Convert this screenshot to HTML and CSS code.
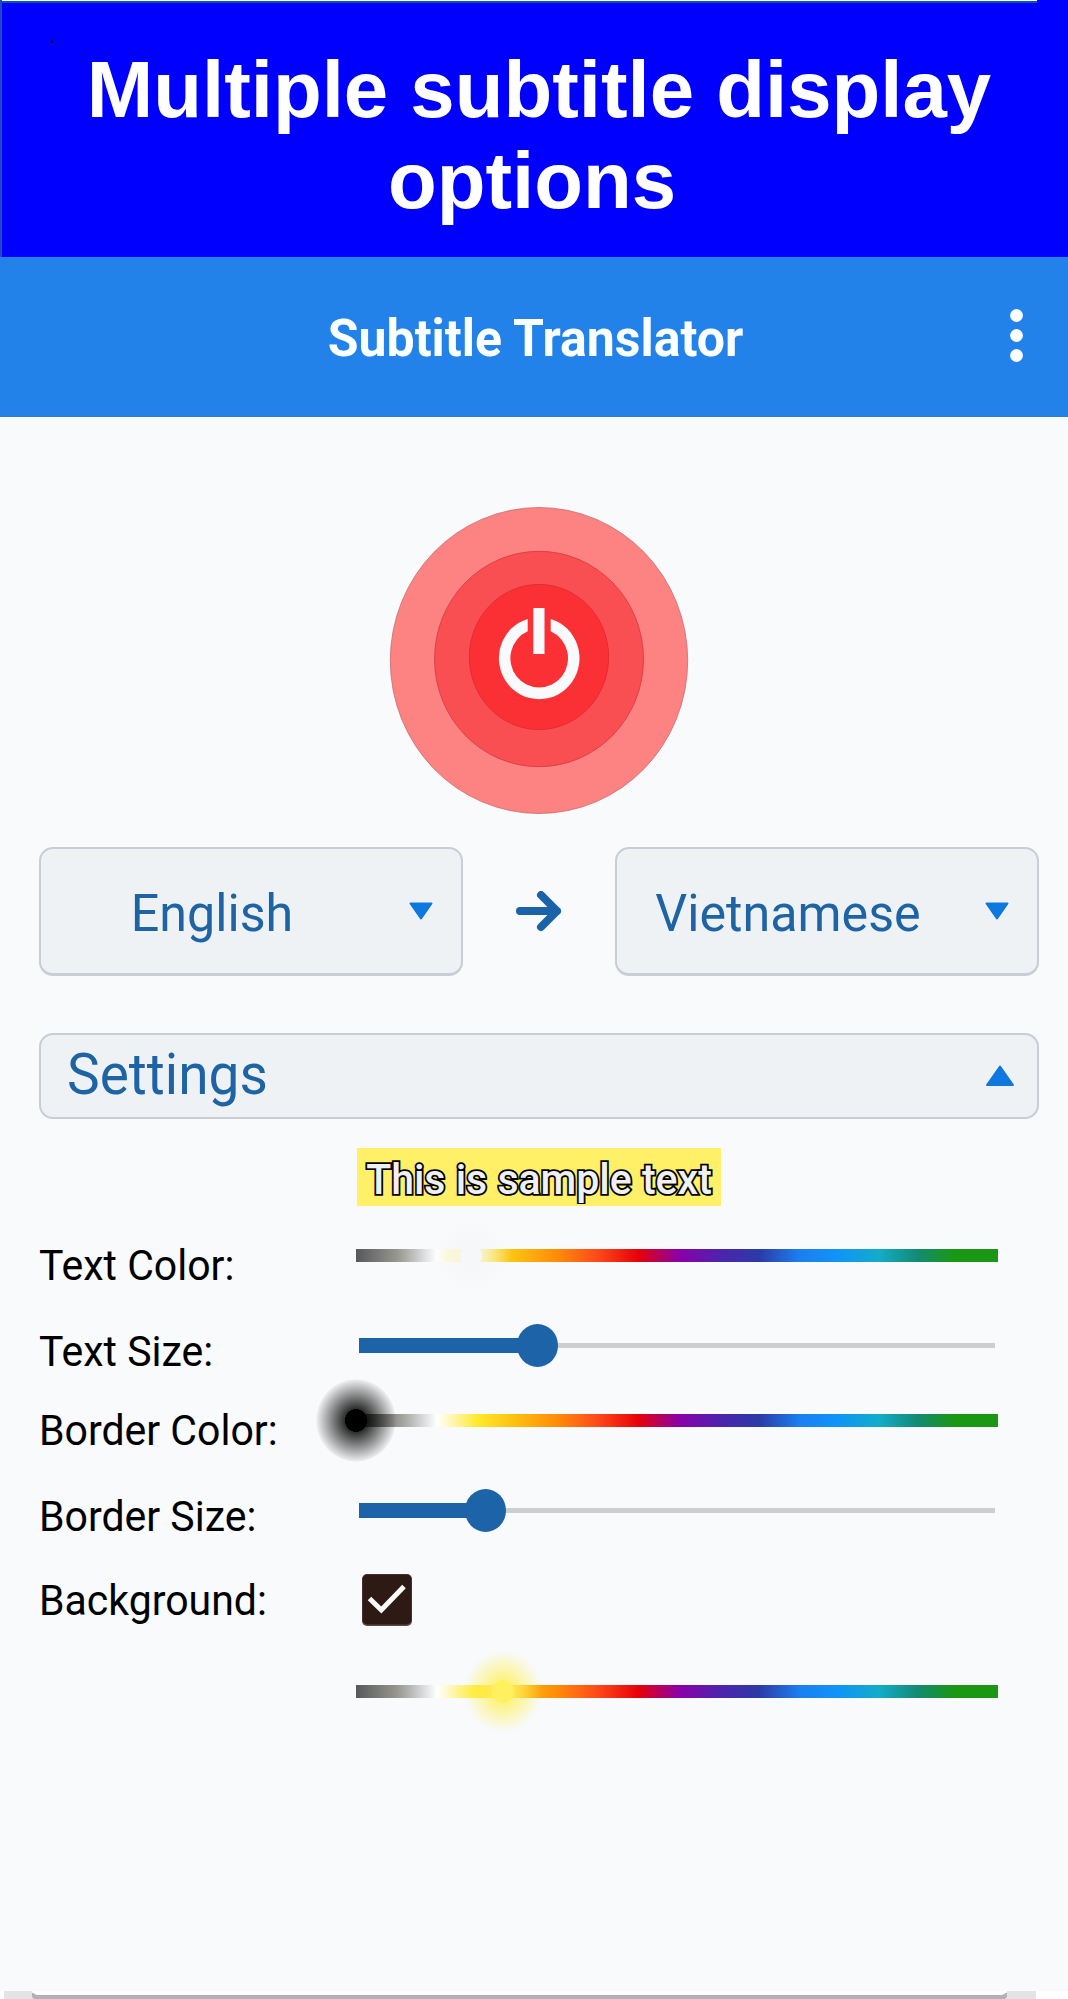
FILE: index.html
```html
<!DOCTYPE html>
<html lang="en">
<head>
    <meta charset="UTF-8">
    <meta name="viewport" content="width=device-width, initial-scale=1.0">
    <title>Subtitle Translator</title>
    <link rel="stylesheet" href="styles.css">
</head>
<body>
    <div class="banner">
        <span class="speck"></span>
        <h1>
            <span class="line first">Multiple subtitle display</span>
            <span class="line second">options</span>
        </h1>
    </div>

    <header class="app-bar">
        <h2><span class="tall">Subtitle Translator</span></h2>
        <svg class="menu" width="14" height="54" viewBox="0 0 14 54">
            <circle cx="6.5" cy="6.5" r="6.4"/>
            <circle cx="6.5" cy="26.5" r="6.4"/>
            <circle cx="6.5" cy="46.5" r="6.4"/>
        </svg>
    </header>

    <main>
        <!-- Power button -->
        <div class="power">
            <svg width="300" height="308" viewBox="0 0 300 308">
                <ellipse cx="150" cy="154.5" rx="148.7" ry="153" fill="#fd8282" stroke="#c96a6a" stroke-width="0.8"/>
                <ellipse cx="150" cy="153" rx="104.5" ry="107.7" fill="#fa4f52" stroke="#d23a3e" stroke-width="0.8"/>
                <ellipse cx="150" cy="151" rx="69.7" ry="72.6" fill="#fb3034" stroke="#d92a30" stroke-width="0.8"/>
                <path d="M138.7 112.9 A40.3 41 0 1 0 161.7 112.9 V125.3 A28.8 29.3 0 1 1 138.7 125.3 Z" fill="#f8fafb"/>
                <rect x="144.3" y="102" width="11.2" height="46" fill="#f8fafb"/>
            </svg>
        </div>

        <!-- Languages -->
        <div class="languages">
            <div class="select">
                <span class="value tall">English</span>
                <svg width="24" height="19" viewBox="0 0 24 19"><path d="M1.5 1.5H22.5L12 16.5Z"/></svg>
            </div>
            <svg class="arrow" width="48" height="42" viewBox="0 0 48 42">
                <path d="M5 20H42M26 4L42 20L26 36"/>
            </svg>
            <div class="select">
                <span class="value tall">Vietnamese</span>
                <svg width="24" height="19" viewBox="0 0 24 19"><path d="M1.5 1.5H22.5L12 16.5Z"/></svg>
            </div>
        </div>

        <!-- Settings -->
        <div class="settings-bar">
            <span class="tall">Settings</span>
            <svg width="30" height="23" viewBox="0 0 30 23"><path d="M2 21H28L15 2.5Z"/></svg>
        </div>

        <div class="sample"><span class="tall">This is sample text</span></div>

        <div class="row row-text-color">
            <label><span class="tall">Text Color:</span></label>
            <div class="spectrum"><i class="halo light"></i></div>
        </div>
        <div class="row row-text-size">
            <label><span class="tall">Text Size:</span></label>
            <div class="slider"><div class="fill" style="width: 179px"></div><i class="thumb"></i></div>
        </div>
        <div class="row row-border-color">
            <label><span class="tall">Border Color:</span></label>
            <div class="spectrum"><i class="halo black"></i></div>
        </div>
        <div class="row row-border-size">
            <label><span class="tall">Border Size:</span></label>
            <div class="slider"><div class="fill" style="width: 127px"></div><i class="thumb"></i></div>
        </div>
        <div class="row row-background">
            <label><span class="tall">Background:</span></label>
            <svg class="checkbox" width="50" height="52" viewBox="0 0 50 52">
                <rect width="50" height="52" rx="5" fill="#5d4740"/>
                <rect x="0.5" y="0.5" width="49" height="50" rx="5" fill="#2e1a14"/>
                <path d="M7.5 24.5L19.3 36L42 12.5" fill="none" stroke="#fafafa" stroke-width="5"/>
            </svg>
        </div>
        <div class="row row-background-color">
            <label></label>
            <div class="spectrum"><i class="halo yellow"></i></div>
        </div>
    </main>

    <footer>
        <svg width="1068" height="8" viewBox="0 0 1068 8">
            <rect width="1068" height="8" fill="#fff"/>
            <rect x="4" width="1032" height="8" fill="#e5e3e5"/>
            <path d="M32 0H1007V4L1004 8H35L32 4Z" fill="#fff"/>
            <path d="M32 1.5L37 4H1002L1007 1.5V6L1005 8H34L32 6Z" fill="#b2b2b6"/>
        </svg>
    </footer>
</body>
</html>
```
FILE: styles.css
```css
* {
    box-sizing: border-box;
}

body {
    margin: 0;
    width: 1068px;
    height: 1999px;
    display: flex;
    flex-direction: column;
    overflow: hidden;
    font-family: Roboto, sans-serif;
    background-color: #f8fafb;
}

h1, h2 {
    margin: 0;
}

svg {
    display: block;
    flex: none;
}

/* text is slightly taller than the font's own proportions */
.tall {
    display: inline-block;
    transform: scaleY(1.04);
}

.banner {
    position: relative;
    height: 257px;
    padding-top: 44px;
    background: linear-gradient(#fff 1px, #0b50b4 1px, #0b50b4 3px, transparent 3px) 0 0 / 1035px 3px no-repeat, #0000ff;
    border-left: 2px solid #1f49c0;
}

.banner h1 {
    font-family: "Liberation Sans", Arial, sans-serif;
    font-size: 79.8px;
    line-height: 91px;
    color: #fff;
    text-align: center;
    white-space: nowrap;
}

.banner .line {
    display: block;
}

.banner .first {
    padding-left: 8px;
}

.banner .second {
    padding-right: 6px;
}

.speck {
    position: absolute;
    left: 49px;
    top: 40px;
    width: 2px;
    height: 3px;
    background-color: #000;
}

.app-bar {
    height: 160px;
    display: flex;
    align-items: center;
    padding: 0 44px 2px 61px;
    background-color: #2282e9;
    border-bottom: 1px solid #2a7fcb;
}

.app-bar h2 {
    flex: 1;
    padding-top: 4px;
    font-size: 50px;
    font-weight: 700;
    color: #fbffff;
    text-align: center;
}

.menu {
    fill: #fbffff;
}

main {
    flex: 1;
    padding: 89px 29px 0 39px;
}

.power {
    display: flex;
    justify-content: center;
    height: 341px;
}

.languages {
    display: flex;
    justify-content: space-between;
    align-items: center;
}

.select {
    display: flex;
    align-items: center;
    width: 424px;
    height: 129px;
    padding-right: 28px;
    background-color: #eef2f5;
    border: 2px solid #c8cdd6;
    border-bottom-width: 3px;
    border-radius: 14px;
}

.select .value {
    flex: 1;
    padding-top: 3px;
    padding-right: 26px;
    font-size: 50.2px;
    color: #1e64a5;
    text-align: center;
}

.select svg,
.settings-bar svg {
    fill: #0f78df;
    stroke: #0f78df;
    stroke-width: 2;
    stroke-linejoin: round;
}

.arrow {
    fill: none;
    stroke: #1a63a9;
    stroke-width: 8;
    stroke-linecap: round;
    stroke-linejoin: round;
}

.settings-bar {
    display: flex;
    justify-content: space-between;
    align-items: center;
    height: 86px;
    margin-top: 57px;
    padding: 0 22px 2px 26px;
    font-size: 55px;
    color: #1e64a5;
    background-color: #eef2f5;
    border: 2px solid #c8cdd6;
    border-radius: 14px;
}

.settings-bar .tall {
    margin-top: -2px;
}

.sample {
    width: 364px;
    height: 58px;
    margin: 29px auto 4px;
    padding-top: 3px;
    font-size: 41px;
    font-weight: 500;
    line-height: 56px;
    text-align: center;
    white-space: nowrap;
    color: #eff0f6;
    background-color: #fff068;
    -webkit-text-stroke: 3.6px #000;
    paint-order: stroke fill;
}

.row {
    display: grid;
    grid-template-columns: 317px 642px;
    grid-template-rows: 100%;
    align-items: center;
    height: 90px;
}

.row label {
    font-size: 41px;
    line-height: 48px;
    color: #000;
    white-space: nowrap;
    padding-top: 19px;
}

.row-text-size label {
    padding-top: 12px;
}

.row-border-color {
    height: 60px;
}

.row-border-size {
    height: 121px;
}

.row-border-size label {
    padding-top: 10px;
}

.row-background {
    height: 57px;
}

.row-background label {
    padding-top: 0;
}

.row-background-color {
    height: 126px;
}

.spectrum {
    position: relative;
    height: 13px;
    background: linear-gradient(to right, #56585b, #96958f 6.3%, #b9b9b5 8.6%, #dbdde0 10.6%, #fff 12.6%, #ffe92b 19%, #fdbe10 25%, #ff8a08 31.5%, #ff4a1a 37.5%, #e60009 44%, #8a00a8 50.3%, #4b25ae 57%, #2b3aa5 62.7%, #1c7ef0 69%, #1094f7 75%, #13acc8 81.5%, #138a72 87.5%, #1a9814 93%);
}

/* picker handle: solid dot with a fading glow */
.halo {
    position: absolute;
    top: -35px;
    width: 80px;
    height: 83px;
    border-radius: 50%;
}

.halo.light {
    left: 75px;
    background: radial-gradient(ellipse closest-side, #f6f7f9 26%, rgba(245, 246, 248, 0.76) 28%, rgba(245, 246, 248, 0.03) 98%, transparent);
}

.halo.black {
    left: -40px;
    background: radial-gradient(ellipse closest-side, #000 27%, rgba(0, 0, 0, 0.82) 28%, rgba(0, 0, 0, 0.05) 98%, transparent);
}

.halo.yellow {
    left: 107px;
    background: radial-gradient(ellipse closest-side, #fff05f 27%, rgba(255, 240, 95, 0.78) 28%, rgba(255, 240, 95, 0.02) 96%, transparent);
}

.slider {
    display: flex;
    align-items: center;
    height: 43px;
    margin: 0 3px;
    background: linear-gradient(#cdced0, #cdced0) center / 100% 5px no-repeat;
}

.slider .fill {
    height: 15px;
    background-color: #1c63a8;
}

.slider .thumb {
    width: 41px;
    height: 43px;
    margin-left: -21px;
    border-radius: 50%;
    background-color: #1c63a8;
}

.checkbox {
    margin-left: 6px;
}

footer {
    height: 8px;
}
```
